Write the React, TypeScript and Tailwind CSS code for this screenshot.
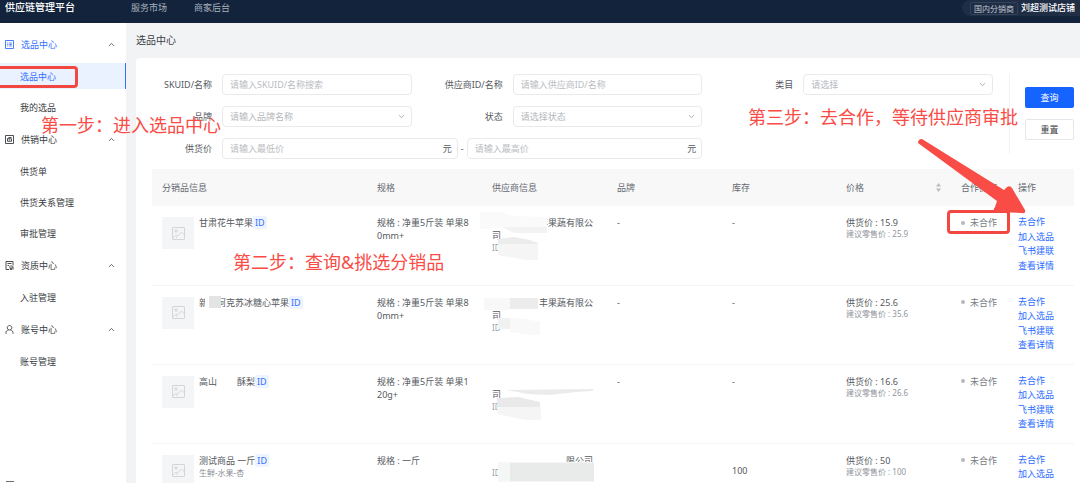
import type { ReactNode } from 'react';
import { ChevronDown, ChevronUp } from 'lucide-react';

type Product = {
  id: string;
  name: ReactNode;
  category?: string;
  spec: string;
  supplier: string;
  supplierWrap?: string;
  mask: ReactNode;
  brand: string;
  stock: string;
  price: string;
  retail: string;
  highlighted?: boolean;
};

const groups = [
  { title: '选品中心', icon: 'list', items: ['选品中心', '我的选品'] },
  { title: '供销中心', icon: 'supply', items: ['供货单', '供货关系管理', '审批管理'] },
  { title: '资质中心', icon: 'cert', items: ['入驻管理'] },
  { title: '账号中心', icon: 'user', items: ['账号管理'] },
];

const actions = ['去合作', '加入选品', '飞书建联', '查看详情'];

const products: Product[] = [
  {
    id: 'p1',
    name: '甘肃花牛苹果',
    spec: '规格 : 净重5斤装 单果80mm+',
    supplier: '丰果蔬有限公',
    supplierWrap: '司',
    mask: (
      <>
        <path fill="#fafafa" d="M0 0 L20 0 L36 4 L67 5 L67 15 L30 15 L0 17Z" />
        <path fill="#f3f3f3" d="M22 15H67V21H34Z" />
        <path fill="#ececec" d="M18 27L34 25L50 28L58 31V34H18Z" />
        <path fill="#f5f5f5" d="M18 32H58V48H46L18 43Z" />
      </>
    ),
    brand: '-',
    stock: '-',
    price: '15.9',
    retail: '25.9',
    highlighted: true,
  },
  {
    id: 'p2',
    name: (
      <span className="relative">
        新疆阿克苏冰糖心苹果
        <span className="absolute left-1.5 top-0 h-3 w-4 border-l-4 border-white bg-[#e4e4e4]" />
      </span>
    ),
    spec: '规格 : 净重5斤装 单果80mm+',
    supplier: '丰果蔬有限公',
    supplierWrap: '司',
    mask: (
      <>
        <path fill="#f8f8f8" d="M4 6H30V18H4Z" />
        <path fill="#ececec" d="M30 6H58V17H30Z" />
        <path fill="#f1f1f1" d="M18 26H30V37H18Z" />
        <path fill="#f9f9f9" d="M30 26L46 27L60 30V43H50L30 40Z" />
      </>
    ),
    brand: '-',
    stock: '-',
    price: '25.6',
    retail: '35.6',
  },
  {
    id: 'p3',
    name: (
      <>
        高山<span className="inline-block w-5" />酥梨
      </>
    ),
    spec: '规格 : 净重5斤装 单果120g+',
    supplier: '',
    supplierWrap: '司',
    mask: (
      <>
        <path fill="#ebebeb" d="M26 19L113 18V20L96 21L70 24L48 23Z" />
        <path fill="#e9e9e9" d="M17 27L38 26L60 31V37H17Z" />
        <path fill="#f5f5f5" d="M17 36H61V49H46L17 43Z" />
      </>
    ),
    brand: '-',
    stock: '-',
    price: '16.6',
    retail: '26.6',
  },
  {
    id: 'p4',
    name: '测试商品 一斤',
    category: '生鲜-水果-杏',
    spec: '规格 : 一斤',
    supplier: '限公司',
    mask: (
      <>
        <path fill="#f5f6f6" d="M18 12H114V32H18Z" />
        <path fill="#e9ebeb" d="M30 13H114V31H30Z" />
      </>
    ),
    brand: '',
    stock: '100',
    price: '50',
    retail: '100',
  },
];

const MenuIcon = ({ name }: { name: string }) => (
  <svg viewBox="0 0 18 18" className="size-[9px] shrink-0" fill="none" stroke="currentColor" strokeWidth="1.8">
    {name === 'list' && <path d="M1 1h16v16H1zM4.500 6h2M8.500 6h5M4.500 9h2M8.500 9h5M4.500 12h2M8.500 12h5" />}
    {name === 'supply' && <path d="M1 1h16v16H1zM5 7.500h8v5H5zM5 7.500l3-2.500h5M8 10h2" />}
    {name === 'cert' && <path d="M8 17H2V1h14v8M5 5h8M5 9h3M12 9.500a2.500 2.500 0 1 0 .1 0M10.500 14v3.500l1.500-1 1.500 1V14M16 11v6" />}
    {name === 'user' && <path d="M9 1a4.500 4.500 0 1 0 .1 0M2 17.500v-2c0-3 2-5 5-5.500M16 17.500v-2c0-3-2-5-5-5.500" />}
  </svg>
);

const Thumbnail = () => (
  <div className="mt-px flex size-8 shrink-0 items-center justify-center bg-[#f4f5f7]">
    <svg viewBox="0 0 26 26" className="size-[13px]" fill="none" stroke="#d3d5d9" strokeWidth="2">
      <rect x="1" y="1" width="24" height="24" rx="1" />
      <circle cx="8" cy="8" r="2.500" />
      <path d="M2 22l6-6 3 2 8-8 6 6M8 22l3-3" />
    </svg>
  </div>
);

const fieldClass =
  'h-[21px] w-full min-w-0 appearance-none rounded-sm border border-[#e9eaec] bg-white px-[7px] text-[9px] text-[#b4b7bc] outline-none placeholder:text-[#b9bcc1]';

const Field = ({ id, label, children }: { id: string; label: string; children: ReactNode }) => (
  <div className="flex items-center gap-2.5">
    <label htmlFor={id} className="w-[60px] shrink-0 whitespace-nowrap text-right">
      {label}
    </label>
    <div className="relative min-w-0 flex-1">{children}</div>
  </div>
);

const SelectBox = ({ id, placeholder }: { id: string; placeholder: string }) => (
  <>
    <select id={id} className={fieldClass}>
      <option>{placeholder}</option>
    </select>
    <ChevronDown className="pointer-events-none absolute right-1.5 top-1.5 size-[9px] text-[#8d9198]" />
  </>
);

const PriceInput = ({ id, label, placeholder }: { id: string; label: string; placeholder: string }) => (
  <div className="relative min-w-0 flex-1">
    <input id={id} aria-label={label} placeholder={placeholder} className={fieldClass} />
    <span className="absolute right-1.5 top-1">元</span>
  </div>
);

const Header = () => (
  <header className="flex h-[23px] shrink-0 items-start bg-[#12233b] pl-[5px] text-[9px] leading-4 text-[#a9b1bd]">
    <h1 className="w-[126px] text-[10px] font-medium leading-[14px] text-white">供应链管理平台</h1>
    <nav className="flex gap-[27px]">
      <a href="#market">服务市场</a>
      <a href="#merchant">商家后台</a>
    </nav>
    <div className="ml-auto flex h-4 items-center gap-[3px] rounded-l-full bg-[#1f2e45] pl-2 pr-[5px]">
      <span className="rounded-xs border border-[#33415a] px-[3px] text-[8px] leading-[11px] text-[#c3c9d2]">国内分销商</span>
      <span className="font-medium text-white">刘超测试店铺</span>
    </div>
  </header>
);

const Sidebar = () => (
  <aside className="flex w-[126px] shrink-0 flex-col bg-white pt-[5px] text-[#3a3d42]">
    {groups.map((group, groupIndex) => (
      <section key={group.title} className="flex flex-col">
        <button
          className={`flex h-[33px] w-full items-center gap-[7px] pl-[5px] pr-2.5 ${groupIndex === 0 ? 'text-[#3370ff]' : ''}`}
        >
          <MenuIcon name={group.icon} />
          {group.title}
          <ChevronUp className="ml-auto size-[9px] text-[#3a3d42]" />
        </button>
        {group.items.map((item, index) => {
          const active = groupIndex === 0 && index === 0;
          return (
            <a
              key={item}
              href="#menu"
              className={`relative mb-[3px] mt-0.5 flex h-[26px] items-center pl-5 ${
                active ? 'border-r border-[#3370ff] bg-[#eaf1ff] text-[#3370ff]' : ''
              }`}
            >
              {item}
              {active && (
                <span className="absolute -left-1 top-[3px] h-[22px] w-[82px] rounded-sm border-3 border-[#f24841]" />
              )}
            </a>
          );
        })}
      </section>
    ))}
    <button aria-label="收起菜单" className="mt-auto h-[3px] w-full overflow-hidden pl-1.5">
      <span className="block h-px w-2 bg-[#6b6f75]" />
    </button>
  </aside>
);

const FilterForm = () => (
  <form className="flex items-start">
    <div className="grid flex-1 grid-cols-3 gap-x-[31px] gap-y-[11px]">
      <Field id="sku" label="SKUID/名称">
        <input id="sku" placeholder="请输入SKUID/名称搜索" className={fieldClass} />
      </Field>
      <Field id="supplier" label="供应商ID/名称">
        <input id="supplier" placeholder="请输入供应商ID/名称" className={fieldClass} />
      </Field>
      <Field id="category" label="类目">
        <SelectBox id="category" placeholder="请选择" />
      </Field>
      <Field id="brand" label="品牌">
        <SelectBox id="brand" placeholder="请输入品牌名称" />
      </Field>
      <Field id="status" label="状态">
        <SelectBox id="status" placeholder="请选择状态" />
      </Field>
      <div className="col-span-2 col-start-1">
        <Field id="min-price" label="供货价">
          <div className="flex items-center gap-[3px]">
            <PriceInput id="min-price" label="最低价" placeholder="请输入最低价" />
            <span>-</span>
            <PriceInput id="max-price" label="最高价" placeholder="请输入最高价" />
          </div>
        </Field>
      </div>
    </div>
    <div className="ml-4 flex h-20 flex-col gap-[11px] border-l border-[#f2f3f5] pl-[15px] pt-[13px]">
      <button type="button" className="h-[21px] w-[49px] rounded-xs bg-[#1664ff] text-white">
        查询
      </button>
      <button type="button" className="h-[21px] w-[49px] rounded-xs border border-[#e5e6eb] text-[#3a3d42]">
        重置
      </button>
    </div>
  </form>
);

const ProductRow = ({ product }: { product: Product }) => (
  <tr className="h-[79px] border-b border-[#f3f4f5] align-top">
    <td className="px-2.5 pt-2.5">
      <div className="flex gap-[5px]">
        <Thumbnail />
        <div>
          <div className="whitespace-nowrap">
            {product.name}
            <a href="#id" className="rounded-xs bg-[#edf4ff] px-0.5 text-[#3370ff]">
              ID
            </a>
          </div>
          {product.category && <div className="text-[8px] leading-3 text-[#8b8f96]">{product.category}</div>}
        </div>
      </div>
    </td>
    <td className="break-all px-2.5 pt-2.5">{product.spec}</td>
    <td className="relative px-2.5 pt-2.5">
      <div className="h-[13px] w-[101px] text-right">{product.supplier}</div>
      <div>{product.supplierWrap}</div>
      <div className="text-[8px] leading-3 text-[#9a9ea5]">ID</div>
      <svg className="absolute -left-0.5 top-1.5 h-[50px] w-[116px]" viewBox="0 0 116 50">
        {product.mask}
      </svg>
    </td>
    <td className="px-2.5 pt-2.5">{product.brand}</td>
    <td className={`px-2.5 ${product.stock === '-' ? 'pt-2.5' : 'pt-5'}`}>{product.stock}</td>
    <td className="px-2.5 pt-2.5">
      <div>供货价 : {product.price}</div>
      <div className="text-[8px] leading-[10px] text-[#92969d]">建议零售价 : {product.retail}</div>
    </td>
    <td className="relative whitespace-nowrap pl-2.5 pt-2.5 text-[#777b82]">
      <div className="flex items-center gap-[5px]">
        <span className="size-1 rounded-full bg-[#b5b8bd]" />
        未合作
      </div>
      {product.highlighted && (
        <span className="absolute -left-1 top-1 h-6 w-[63px] rounded-sm border-3 border-[#f24841]" />
      )}
    </td>
    <td className="px-2.5 pt-[9px]">
      <div className="flex h-[58px] flex-col items-start justify-between leading-[14px] text-[#2b6cff]">
        {actions.map((action) => (
          <a key={action} href="#action">
            {action}
          </a>
        ))}
      </div>
    </td>
  </tr>
);

const ProductTable = () => (
  <table className="mt-2.5 w-full table-fixed border-collapse text-left leading-[13px]">
    <colgroup>
      <col />
      <col className="w-[115px]" />
      <col className="w-[125px]" />
      <col className="w-[115px]" />
      <col className="w-[114px]" />
      <col className="w-[115px]" />
      <col className="w-[57px]" />
      <col className="w-[66px]" />
    </colgroup>
    <thead>
      <tr className="h-[37px] bg-[#f8f8f9] text-[#666a71] *:px-2.5 *:font-normal">
        <th>分销品信息</th>
        <th>规格</th>
        <th>供应商信息</th>
        <th>品牌</th>
        <th>库存</th>
        <th>
          <div className="flex items-center justify-between">
            价格
            <svg viewBox="0 0 10 18" className="h-[9px] w-[5px]" fill="#b9bcc1">
              <path d="M5 0l5 7H0zM5 18l5-7H0z" />
            </svg>
          </div>
        </th>
        <th className="whitespace-nowrap">合作操作</th>
        <th>操作</th>
      </tr>
    </thead>
    <tbody>
      {products.map((product) => (
        <ProductRow key={product.id} product={product} />
      ))}
    </tbody>
  </table>
);

// Walkthrough captions drawn over the page
const Guide = () => (
  <div className="pointer-events-none absolute inset-0 text-[18px] leading-6 text-[#f94c46]">
    <p className="absolute left-[41px] top-[113px]">第一步：进入选品中心</p>
    <p className="absolute left-[233px] top-[250px]">第二步：查询&amp;挑选分销品</p>
    <p className="absolute right-[62px] top-[105px]">第三步：去合作，等待供应商审批</p>
    <svg className="absolute right-[52px] top-[136px] h-20 w-[112px]" viewBox="0 0 112 80" fill="#f94c46">
      <path d="M2 7Q2 3 6 3L88 54L91 51Q94 49 96 52L109 74Q110 78 106 77L80 76Q76 75 79 71L81 65L2 7Z" />
    </svg>
  </div>
);

export default function App() {
  return (
    <div className="relative flex h-screen flex-col overflow-hidden bg-[#f2f3f5] font-['Noto_Sans','Noto_Sans_CJK_SC',sans-serif] text-[9px] leading-[13px] text-[#555960]">
      <Header />
      <div className="flex min-h-0 flex-1">
        <Sidebar />
        <main className="min-w-0 flex-1 overflow-hidden pl-2.5">
          <h2 className="flex h-[35px] items-center text-[10px] text-[#3a3d42]">选品中心</h2>
          <div className="rounded-tl-sm bg-white pl-4 pr-1.5 pt-4">
            <FilterForm />
            <ProductTable />
          </div>
        </main>
      </div>
      <Guide />
    </div>
  );
}
